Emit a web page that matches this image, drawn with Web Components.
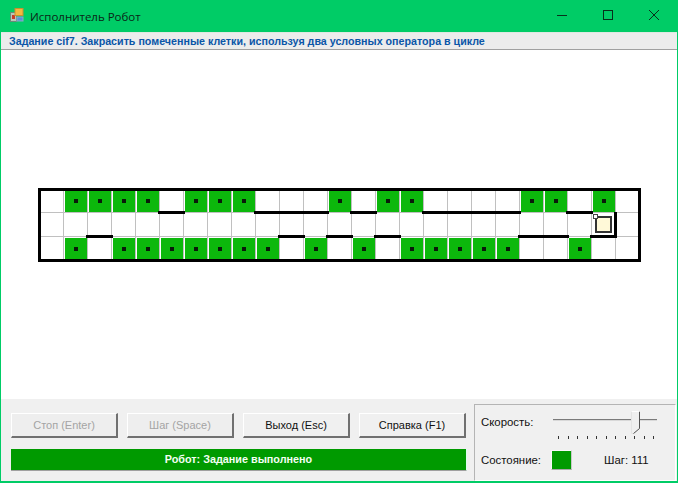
<!DOCTYPE html>
<html lang="ru">
<head>
<meta charset="utf-8">
<title>Исполнитель Робот</title>
<style>
  html, body { margin: 0; padding: 0; background: #00cc66; }
  body { font-family: "Liberation Sans", Arial, sans-serif; }
</style>
</head>
<body>
<robot-window>
  <title-bar slot="title">Исполнитель Робот</title-bar>
  <task-banner slot="banner">Задание cif7. Закрасить помеченные клетки, используя два условных оператора в цикле</task-banner>
  <robot-field slot="field"></robot-field>
  <control-bar slot="controls">
    <win-button disabled>Стоп (Enter)</win-button>
    <win-button disabled>Шаг (Space)</win-button>
    <win-button>Выход (Esc)</win-button>
    <win-button>Справка (F1)</win-button>
    <status-line slot="status">Робот: Задание выполнено</status-line>
    <speed-panel slot="panel"></speed-panel>
  </control-bar>
</robot-window>

<script>
const templateWindow = document.createElement('template');
templateWindow.innerHTML = `
  <style>
    :host {
      display: flex;
      flex-direction: column;
      width: 678px;
      height: 483px;
      box-sizing: border-box;
      background: #00cc66;
      padding: 0 1px 1px 1px;
      overflow: hidden;
    }
    .main {
      height: 349px;
      box-sizing: border-box;
      padding: 138px 0 0 38px;
      background: #fff;
    }
  </style>
  <slot name="title"></slot>
  <slot name="banner"></slot>
  <div class="main"><slot name="field"></slot></div>
  <slot name="controls"></slot>
`;
class RobotWindow extends HTMLElement {
  constructor() {
    super();
    this.attachShadow({ mode: 'open' });
    this.shadowRoot.appendChild(templateWindow.content.cloneNode(true));
  }
}
customElements.define('robot-window', RobotWindow);

const templateTitle = document.createElement('template');
templateTitle.innerHTML = `
  <style>
    :host {
      display: flex;
      align-items: center;
      height: 32px;
      box-sizing: border-box;
      padding-left: 9px;
      font: 11.5px "Open Sans", "Noto Sans", sans-serif;
      color: #0b2416;
    }
    .icon { width: 14px; height: 14px; margin: -2px 6px 0 0; }
    .text { flex: 1; }
    .btn {
      width: 46px;
      height: 32px;
      display: flex;
      align-items: center;
      justify-content: center;
    }
    .btn svg { width: 46px; height: 32px; }
  </style>
  <svg class="icon" viewBox="0 0 14 14">
    <rect x="0.5" y="4.5" width="6" height="9" fill="#b8c8b8" stroke="#6a8a78"/>
    <rect x="2" y="7" width="3" height="4" fill="#c83a28"/>
    <rect x="5" y="0.5" width="8" height="7" fill="#f4b840" stroke="#c89030"/>
    <rect x="7" y="9" width="6" height="4" fill="#5a90d8" stroke="#8aa8c8"/>
  </svg>
  <span class="text"><slot></slot></span>
  <div class="btn"><svg viewBox="0 0 46 32"><path d="M18 15.5h10" stroke="#08301c" stroke-width="1" fill="none"/></svg></div>
  <div class="btn"><svg viewBox="0 0 46 32"><rect x="18.5" y="10.5" width="9" height="9" stroke="#08301c" fill="none"/></svg></div>
  <div class="btn"><svg viewBox="0 0 46 32"><path d="M18 10l10 10M28 10l-10 10" stroke="#08301c" fill="none"/></svg></div>
`;
class TitleBar extends HTMLElement {
  constructor() {
    super();
    this.attachShadow({ mode: 'open' });
    this.shadowRoot.appendChild(templateTitle.content.cloneNode(true));
  }
}
customElements.define('title-bar', TitleBar);

const templateBanner = document.createElement('template');
templateBanner.innerHTML = `
  <style>
    :host {
      display: block;
      height: 18px;
      box-sizing: border-box;
      padding: 1px 0 0 8px;
      background: #ececec;
      border-top: 1px solid #dfe8e2;
      border-bottom: 1px solid #a0a0a0;
      font: bold 10.7px/14px "Liberation Sans", Arial, sans-serif;
      color: #0a56a8;
      white-space: nowrap;
    }
  </style>
  <slot></slot>
`;
class TaskBanner extends HTMLElement {
  constructor() {
    super();
    this.attachShadow({ mode: 'open' });
    this.shadowRoot.appendChild(templateBanner.content.cloneNode(true));
  }
}
customElements.define('task-banner', TaskBanner);

const templateCell = document.createElement('template');
templateCell.innerHTML = `
  <style>
    :host {
      display: block;
      position: relative;
      width: 24px;
      height: 24px;
      box-sizing: border-box;
      border-left: 1px solid #c0c0c0;
      border-top: 1px solid #c0c0c0;
    }
    :host([first]) { border-top: none; }
    .paint {
      display: none;
      position: absolute;
      left: 1px; top: 1px; right: 0; bottom: 0;
      background: #0cb80c;
      align-items: center;
      justify-content: center;
    }
    :host([first]) .paint { top: 2px; }
    :host([marked]) .paint { display: flex; }
    .paint i { width: 4px; height: 4px; background: #0a1a0a; }
    .wall { display: none; position: absolute; background: #000; z-index: 1; }
    :host([wall-bottom]) .bottom {
      display: block;
      left: -2px; right: -2px; bottom: -2px; height: 3px;
    }
    :host([wall-right]) .right {
      display: block;
      top: -1px; bottom: -1px; right: -2px; width: 3px;
    }
    .robot {
      display: none;
      position: absolute;
      left: 3px; top: 3px;
      width: 17px; height: 17px;
      box-sizing: border-box;
      background: #fff9d8;
      border: 2px solid #333;
      z-index: 2;
    }
    .robot::before {
      content: '';
      position: absolute;
      left: -4px; top: -4px;
      width: 3px; height: 3px;
      background: #fff;
      border: 1px solid #444;
    }
    :host([robot]) .robot { display: block; }
  </style>
  <div class="paint"><i></i></div>
  <div class="robot"></div>
  <div class="wall bottom"></div>
  <div class="wall right"></div>
`;
class FieldCell extends HTMLElement {
  constructor() {
    super();
    this.attachShadow({ mode: 'open' });
    this.shadowRoot.appendChild(templateCell.content.cloneNode(true));
  }
}
customElements.define('field-cell', FieldCell);

const templateField = document.createElement('template');
templateField.innerHTML = `
  <style>
    :host {
      display: block;
      position: relative;
      width: 600px;
      height: 72px;
    }
    .grid {
      display: grid;
      grid-template-columns: repeat(25, 24px);
      grid-auto-rows: 24px;
    }
    .frame {
      position: absolute;
      left: -1px; top: 0; right: -2px; bottom: -2px;
      border: 3px solid #000;
      pointer-events: none;
      z-index: 3;
    }
  </style>
  <div class="grid"></div>
  <div class="frame"></div>
`;
// номера столбцов: закрашенные клетки и стены под клетками
const FIELD_MARKS = [
  [1, 2, 3, 4, 6, 7, 8, 12, 14, 15, 20, 21, 23],
  [],
  [1, 3, 4, 5, 6, 7, 8, 9, 11, 13, 15, 16, 17, 18, 19, 22]
];
const FIELD_WALLS = [
  [5, 9, 10, 11, 13, 16, 17, 18, 19, 22],
  [2, 10, 12, 14, 20, 21, 23],
  []
];
class RobotField extends HTMLElement {
  constructor() {
    super();
    this.attachShadow({ mode: 'open' });
    this.shadowRoot.appendChild(templateField.content.cloneNode(true));
  }

  connectedCallback() {
    const grid = this.shadowRoot.querySelector('.grid');
    for (let row = 0; row < 3; row++) {
      for (let col = 0; col < 25; col++) {
        const cell = document.createElement('field-cell');
        if (row === 0) cell.setAttribute('first', '');
        if (FIELD_MARKS[row].includes(col)) cell.setAttribute('marked', '');
        if (FIELD_WALLS[row].includes(col)) cell.setAttribute('wall-bottom', '');
        if (row === 1 && col === 23) {
          cell.setAttribute('robot', '');
          cell.setAttribute('wall-right', '');
        }
        grid.appendChild(cell);
      }
    }
  }
}
customElements.define('robot-field', RobotField);

const templateControls = document.createElement('template');
templateControls.innerHTML = `
  <style>
    :host {
      display: flex;
      height: 82px;
      box-sizing: border-box;
      background: #f0f0f0;
      padding: 5px 1px 0 10px;
    }
    .left {
      width: 456px;
      padding-top: 9px;
      margin-right: 7px;
    }
    .buttons {
      display: flex;
      gap: 9px;
      margin-bottom: 11px;
    }
  </style>
  <div class="left">
    <div class="buttons"><slot></slot></div>
    <slot name="status"></slot>
  </div>
  <slot name="panel"></slot>
`;
class ControlBar extends HTMLElement {
  constructor() {
    super();
    this.attachShadow({ mode: 'open' });
    this.shadowRoot.appendChild(templateControls.content.cloneNode(true));
  }
}
customElements.define('control-bar', ControlBar);

const templateButton = document.createElement('template');
templateButton.innerHTML = `
  <style>
    :host {
      display: flex;
      align-items: center;
      justify-content: center;
      width: 107px;
      height: 25px;
      box-sizing: border-box;
      background: #f0f0f0;
      border-top: 1px solid #fff;
      border-left: 1px solid #fff;
      border-right: 2px solid #707070;
      border-bottom: 2px solid #707070;
      font: 11px "Liberation Sans", Arial, sans-serif;
      color: #111;
    }
    :host([disabled]) { color: #a4a4a4; background: #eeeeee; }
  </style>
  <slot></slot>
`;
class WinButton extends HTMLElement {
  constructor() {
    super();
    this.attachShadow({ mode: 'open' });
    this.shadowRoot.appendChild(templateButton.content.cloneNode(true));
  }
}
customElements.define('win-button', WinButton);

const templateStatus = document.createElement('template');
templateStatus.innerHTML = `
  <style>
    :host {
      display: block;
      width: 456px;
      height: 22px;
      box-sizing: border-box;
      background: #009a00;
      border-right: 1px solid #dfe;
      border-bottom: 1px solid #a0a0a0;
      text-align: center;
      font: bold 10.8px/21px "Liberation Sans", Arial, sans-serif;
      color: #f4fff4;
    }
  </style>
  <slot></slot>
`;
class StatusLine extends HTMLElement {
  constructor() {
    super();
    this.attachShadow({ mode: 'open' });
    this.shadowRoot.appendChild(templateStatus.content.cloneNode(true));
  }
}
customElements.define('status-line', StatusLine);

const templateSlider = document.createElement('template');
templateSlider.innerHTML = `
  <style>
    :host { display: block; width: 106px; height: 30px; }
    svg { display: block; }
  </style>
  <svg width="106" height="30" viewBox="0 0 106 30">
    <rect x="0" y="8" width="104" height="1" fill="#7a7a7a"/>
    <rect x="0" y="9" width="104" height="1" fill="#d8d8d8"/>
    <g class="ticks" fill="#333"></g>
    <path d="M78.5 0.5h8v17l-5 5h-3z" fill="#f0f0f0" stroke="#e4e4e4"/>
    <path d="M86.5 0.5v17l-6 5" fill="none" stroke="#555"/>
    <path d="M78.5 0.5h8" fill="none" stroke="#fff"/>
  </svg>
`;
class TrackSlider extends HTMLElement {
  constructor() {
    super();
    this.attachShadow({ mode: 'open' });
    this.shadowRoot.appendChild(templateSlider.content.cloneNode(true));
  }

  connectedCallback() {
    const ticks = this.shadowRoot.querySelector('.ticks');
    for (let i = 0; i < 11; i++) {
      const tick = document.createElementNS('http://www.w3.org/2000/svg', 'rect');
      tick.setAttribute('x', Math.round(5 + i * 9.5));
      tick.setAttribute('y', 25);
      tick.setAttribute('width', 1);
      tick.setAttribute('height', 3);
      ticks.appendChild(tick);
    }
  }
}
customElements.define('track-slider', TrackSlider);

const templatePanel = document.createElement('template');
templatePanel.innerHTML = `
  <style>
    :host {
      display: block;
      width: 203px;
      height: 77px;
      box-sizing: border-box;
      border: 1px solid #b4b4b4;
      border-right-color: #fff;
      border-bottom-color: #fff;
      padding: 6px 0 0 6px;
      font: 11.4px "Liberation Sans", Arial, sans-serif;
      color: #111;
    }
    .row { display: flex; align-items: center; }
    .speed { height: 30px; margin-bottom: 9px; align-items: flex-start; }
    .speed span { width: 72px; padding-top: 5px; }
    .state { height: 20px; }
    .state .label { width: 70px; }
    .swatch {
      width: 21px;
      height: 20px;
      box-sizing: border-box;
      background: #009a00;
      border: 1px solid #f8f8f8;
      border-bottom-color: #a8a8a8;
      border-right-color: #c8c8c8;
    }
    .step { margin-left: 32px; }
  </style>
  <div class="row speed"><span>Скорость:</span><track-slider></track-slider></div>
  <div class="row state"><span class="label">Состояние:</span><div class="swatch"></div><span class="step">Шаг: 111</span></div>
`;
class SpeedPanel extends HTMLElement {
  constructor() {
    super();
    this.attachShadow({ mode: 'open' });
    this.shadowRoot.appendChild(templatePanel.content.cloneNode(true));
  }
}
customElements.define('speed-panel', SpeedPanel);
</script>
</body>
</html>
